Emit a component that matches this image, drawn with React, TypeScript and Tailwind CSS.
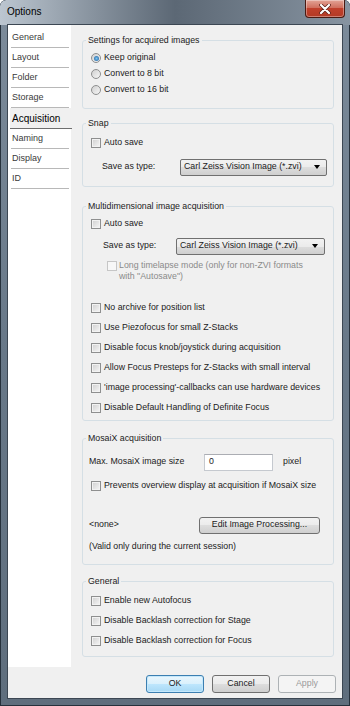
import type { ReactNode } from "react";

const navItems = ["General", "Layout", "Folder", "Storage", "Acquisition", "Naming", "Display", "ID"];

function Check({ disabled }: { disabled?: boolean }) {
  return (
    <span
      className={
        disabled
          ? "block w-[10px] h-[10px] shrink-0 border border-[#c6c6c6] bg-[#f7f7f7]"
          : "block w-[10px] h-[10px] shrink-0 border border-[#8e8f8f] bg-linear-to-br from-[#cfcfcf] to-[#f7f7f7] shadow-[inset_0_0_0_1px_#f2f2f2]"
      }
    />
  );
}

function Radio({ checked }: { checked?: boolean }) {
  return (
    <span className="w-[10px] h-[10px] shrink-0 rounded-full border border-[#8e8f8f] bg-linear-to-br from-[#d0d0d0] to-[#f7f7f7] flex items-center justify-center">
      {checked && <span className="w-[5px] h-[5px] rounded-full bg-radial from-[#7cc4f0] to-[#145b9c]" />}
    </span>
  );
}

function CheckRow({ label, className = "" }: { label: string; className?: string }) {
  return (
    <div className={`h-[20px] flex items-center gap-[3px] ${className}`}>
      <Check />
      <span>{label}</span>
    </div>
  );
}

function Select({ width }: { width: string }) {
  return (
    <div
      className={`${width} h-[17px] flex items-center justify-between pl-[3px] pr-[6px] border border-[#707070] rounded-[2px] bg-[linear-gradient(#f2f2f2_0%,#ebebeb_50%,#dddddd_50%,#cfcfcf_100%)]`}
    >
      <span>Carl Zeiss Vision Image (*.zvi)</span>
      <span className="w-0 h-0 border-x-[3.5px] border-x-transparent border-t-[4px] border-t-black" />
    </div>
  );
}

function Group({ title, className, children }: { title: string; className: string; children: ReactNode }) {
  return (
    <div className={`relative border border-[#d5dfe5] rounded-[3px] ${className}`}>
      <span className="absolute -top-[7px] left-[3px] px-[2px] bg-[#f0f0f0] leading-[12px]">{title}</span>
      {children}
    </div>
  );
}

export default function App() {
  return (
    <div className="w-[350px] h-[706px] flex flex-col bg-linear-to-b from-[#7d8c9b] via-[#687888] to-[#5f6e7d] rounded-t-[6px] shadow-[inset_0_0_0_1px_#26313c] font-['Liberation_Sans',Arial,sans-serif] text-[8.8px] text-[#1b1b1b] overflow-hidden">
      {/* Title bar */}
      <div className="h-[25px] shrink-0 flex items-start justify-between pl-[7px] pr-[5px] rounded-t-[6px] bg-linear-to-r from-[#bcc6d0] via-[#5c6875] to-[#8794a1]">
        <span className="mt-[5px] text-[10px] leading-[14px] text-black">Options</span>
        <button className="w-[40px] h-[18px] flex items-center justify-center rounded-b-[4px] border border-t-0 border-[#4a1a12] bg-[linear-gradient(#e3a496_0%,#d0705e_45%,#c0402b_50%,#b33a25_100%)] shadow-[inset_0_0_0_1px_rgba(255,255,255,0.35)]">
          <svg width="12" height="10" viewBox="0 0 12 10">
            <path d="M2 1 L10 9 M10 1 L2 9" stroke="#5a2018" strokeWidth="3.6" strokeLinecap="round" />
            <path d="M2 1 L10 9 M10 1 L2 9" stroke="#ffffff" strokeWidth="2.2" strokeLinecap="round" />
          </svg>
        </button>
      </div>

      {/* Client area */}
      <div className="flex-1 mx-[8px] mb-[8px] flex flex-col bg-[#f0f0f0] shadow-[0_0_0_1px_#3c4753]">
        <div className="h-[642px] flex">
          {/* Left navigation */}
          <div className="w-[63px] shrink-0 bg-white pt-[3px] flex flex-col text-[9px]">
            {navItems.map((item) =>
              item === "Acquisition" ? (
                <div
                  key={item}
                  className="h-[21px] ml-[2px] -mr-[1px] pl-[2px] flex items-center bg-[#f0f0f0] border-b border-[#6e6e6e] text-[10px] text-black"
                >
                  {item}
                </div>
              ) : (
                <div
                  key={item}
                  className="h-[20px] ml-[3px] mr-[2px] pl-[1px] flex items-center border-b border-[#b8b8b8] text-[#3a3a3a]"
                >
                  {item}
                </div>
              )
            )}
          </div>

          {/* Right content */}
          <div className="flex-1 pl-[11px] pr-[8px] flex flex-col">
            <Group title="Settings for acquired images" className="mt-[15px] h-[69px] pt-[9px] pl-[8px]">
              <div className="h-[16px] flex items-center gap-[3px]">
                <Radio checked />
                <span>Keep original</span>
              </div>
              <div className="h-[16px] flex items-center gap-[3px]">
                <Radio />
                <span>Convert to 8 bit</span>
              </div>
              <div className="h-[16px] flex items-center gap-[3px]">
                <Radio />
                <span>Convert to 16 bit</span>
              </div>
            </Group>

            <Group title="Snap" className="mt-[14px] h-[64px] pt-[9px] pl-[8px]">
              <CheckRow label="Auto save" />
              <div className="mt-[4px] h-[20px] flex items-center pl-[11px]">
                <span className="w-[78px] shrink-0">Save as type:</span>
                <Select width="w-[147px]" />
              </div>
            </Group>

            <Group title="Multidimensional image acquisition" className="mt-[19px] h-[215px] pt-[7px] pl-[8px]">
              <CheckRow label="Auto save" />
              <div className="mt-[2px] h-[20px] flex items-center pl-[12px]">
                <span className="w-[73px] shrink-0">Save as type:</span>
                <Select width="w-[149px]" />
              </div>
              <div className="mt-[4px] pl-[16px] flex items-start gap-[2px] text-[#8a8a8a] leading-[11px]">
                <span className="mt-[1px] flex">
                  <Check disabled />
                </span>
                <span>
                  Long timelapse mode (only for non-ZVI formats
                  <br />
                  with "Autosave")
                </span>
              </div>
              <CheckRow label="No archive for position list" className="mt-[16px]" />
              <CheckRow label="Use Piezofocus for small Z-Stacks" />
              <CheckRow label="Disable focus knob/joystick during acquisition" />
              <CheckRow label="Allow Focus Presteps for Z-Stacks with small interval" />
              <CheckRow label="'image processing'-callbacks can use hardware devices" />
              <CheckRow label="Disable Default Handling of Definite Focus" />
            </Group>

            <Group title="MosaiX acquisition" className="mt-[17px] h-[127px] pt-[13px] pl-[6px]">
              <div className="h-[20px] flex items-center">
                <span className="w-[115px] shrink-0">Max. MosaiX image size</span>
                <div className="w-[69px] h-[17px] flex items-center pl-[4px] bg-white border border-[#c5c9cf] border-t-[#abadb3]">
                  0
                </div>
                <span className="ml-[10px]">pixel</span>
              </div>
              <CheckRow label="Prevents overview display at acquisition if MosaiX size" className="mt-[4px] pl-[2px]" />
              <div className="mt-[19px] h-[20px] flex items-center">
                <span className="w-[110px] shrink-0">&lt;none&gt;</span>
                <button className="w-[121px] h-[17px] flex items-center justify-center border border-[#707070] rounded-[3px] bg-[linear-gradient(#f2f2f2_0%,#ebebeb_50%,#dddddd_50%,#cfcfcf_100%)]">
                  Edit Image Processing...
                </button>
              </div>
              <div className="mt-[2px] h-[20px] flex items-center">(Valid only during the current session)</div>
            </Group>

            <Group title="General" className="mt-[16px] h-[76px] pt-[9px] pl-[8px]">
              <CheckRow label="Enable new Autofocus" />
              <CheckRow label="Disable Backlash correction for Stage" />
              <CheckRow label="Disable Backlash correction for Focus" />
            </Group>
          </div>
        </div>

        {/* Dialog buttons */}
        <div className="flex-1 flex justify-end items-start pt-[8px] pr-[6px] gap-[8px]">
          <button className="w-[58px] h-[18px] flex items-center justify-center border border-[#3c7fb1] rounded-[3px] bg-[linear-gradient(#eaf6fd_0%,#d9f0fc_50%,#bee6fd_50%,#a7d9f5_100%)] shadow-[inset_0_0_0_1px_#c5e8fb]">
            OK
          </button>
          <button className="w-[58px] h-[18px] flex items-center justify-center border border-[#707070] rounded-[3px] bg-[linear-gradient(#f2f2f2_0%,#ebebeb_50%,#dddddd_50%,#cfcfcf_100%)]">
            Cancel
          </button>
          <button className="w-[58px] h-[18px] flex items-center justify-center border border-[#adb2b5] rounded-[3px] bg-[#f4f4f4] text-[#9a9a9a]">
            Apply
          </button>
        </div>
      </div>
    </div>
  );
}
